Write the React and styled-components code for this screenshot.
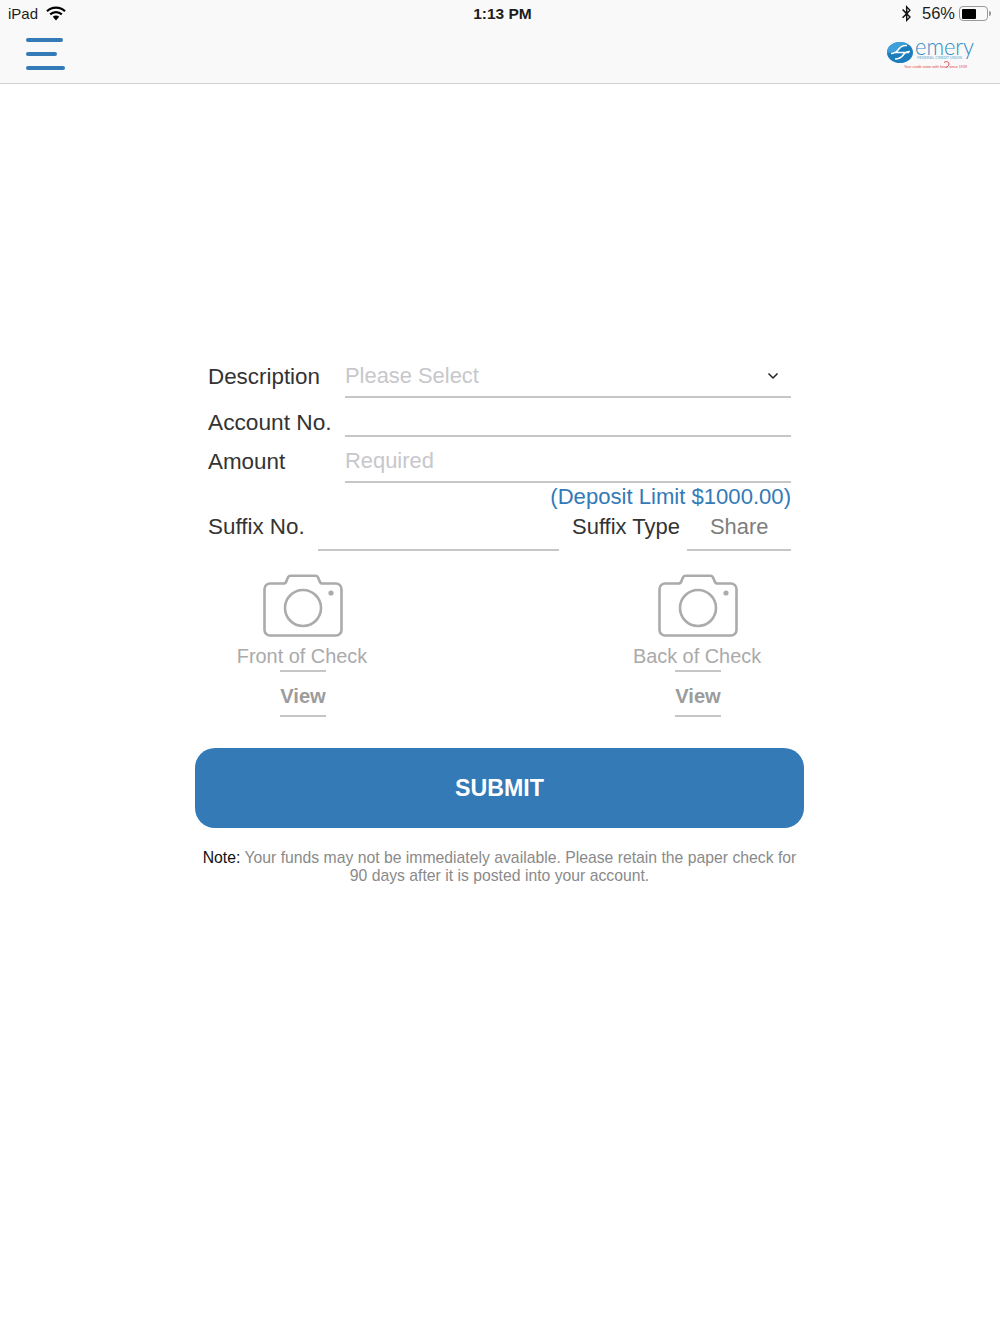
import styled, { createGlobalStyle } from "styled-components";
import { FaBluetoothB } from "react-icons/fa";

const Global = createGlobalStyle`
  body {
    margin: 0;
    background: #fff;
    font-family: "Liberation Sans", Arial, sans-serif;
  }
`;

const Page = styled.div`
  width: 1000px;
  height: 1334px;
  overflow: hidden;
`;

const Header = styled.header`
  height: 84px;
  box-sizing: border-box;
  background: #f9f9f9;
  border-bottom: 1px solid #d2d2d2;
`;

const StatusBar = styled.div`
  height: 27px;
  display: grid;
  grid-template-columns: 1fr auto 1fr;
  align-items: center;
  padding: 0 12px 0 8px;
  font-size: 16.5px;
  color: #1c1c1c;
`;

const StatusLeft = styled.div`
  display: flex;
  align-items: center;
  gap: 8px;
  font-size: 15px;
`;

const StatusRight = styled.div`
  display: flex;
  align-items: center;
  justify-content: flex-end;
  gap: 4px;
`;

const Time = styled.div`
  font-size: 15.5px;
  font-weight: bold;
  margin-left: 9px;
`;

const Battery = styled.div`
  width: 29px;
  height: 15px;
  box-sizing: border-box;
  border: 1px solid #9a9a9a;
  border-radius: 4px;
  padding: 1.5px;
  display: flex;
  position: relative;

  &::before {
    content: "";
    width: 62%;
    background: #000;
    border-radius: 1px;
  }

  &::after {
    content: "";
    position: absolute;
    right: -4px;
    top: 4px;
    width: 2px;
    height: 5px;
    background: #9a9a9a;
    border-radius: 0 2px 2px 0;
  }
`;

const BluetoothWrap = styled.span`
  display: flex;
  margin-right: 3px;
`;

const NavRow = styled.div`
  display: flex;
  justify-content: space-between;
  align-items: flex-start;
  padding: 11px 24px 0 26px;
`;

const Menu = styled.div`
  display: flex;
  flex-direction: column;
  gap: 10px;
`;

const MenuBar = styled.div`
  width: ${(p) => p.$w}px;
  height: 4px;
  border-radius: 2px;
  background: #337ab7;
`;

const LogoSvg = styled.svg`
  display: block;
  margin-top: -8px;
`;

const Panel = styled.main`
  width: 609px;
  margin-left: 195px;
  padding-top: 272px;
`;

const Form = styled.div`
  width: 583px;
  margin: 0 13px;
  color: #333;
  font-size: 22.4px;
`;

const Row = styled.div`
  display: flex;
  height: ${(p) => p.$h}px;
`;

const Label = styled.div`
  width: ${(p) => p.$w || 137}px;
  flex-shrink: 0;
  box-sizing: border-box;
  padding-top: ${(p) => p.$top}px;
  padding-left: ${(p) => p.$left || 0}px;
  font-size: ${(p) => p.$size || 22.4}px;
  line-height: 26px;
  white-space: nowrap;
`;

const Field = styled.div`
  flex: ${(p) => (p.$w ? `0 0 ${p.$w}px` : 1)};
  box-sizing: border-box;
  height: ${(p) => p.$h}px;
  padding: ${(p) => p.$pad || "0"};
  border-bottom: 2px solid #c6c6c6;
  display: flex;
  justify-content: space-between;
  align-items: center;
`;

const Placeholder = styled.span`
  color: #c7c7cc;
  font-size: 21.9px;
`;

const Value = styled.span`
  color: #7d7d7d;
  font-size: 21.9px;
  margin-left: 23px;
`;

const Chevron = styled.svg`
  margin-right: 12px;
`;

const Limit = styled.div`
  height: 27px;
  line-height: 27px;
  font-size: 22.1px;
  text-align: right;
  color: #337ab7;
`;

const CheckRow = styled.div`
  display: grid;
  grid-template-columns: 190px 190px;
  column-gap: 205px;
  margin-top: 23px;
`;

const CheckCol = styled.div`
  display: flex;
  flex-direction: column;
  align-items: center;
`;

const CheckLabel = styled.div`
  margin: 6px 2px 2px 0;
  font-size: 19.9px;
  line-height: 24px;
  color: #aaa;
  white-space: nowrap;
`;

const Rule = styled.div`
  width: 46px;
  height: 2px;
  background: #c6c6c6;
`;

const ViewLink = styled.div`
  margin: 12px 0 7px;
  font-size: 20.2px;
  font-weight: bold;
  line-height: 24px;
  color: #9c9c9c;
`;

const SubmitButton = styled.button`
  display: block;
  width: 609px;
  height: 80px;
  margin-top: 31px;
  border: 0;
  border-radius: 20px;
  background: #337ab7;
  color: #fff;
  font-family: inherit;
  font-size: 23.2px;
  font-weight: bold;
`;

const Note = styled.p`
  margin: 21px 0 0;
  font-size: 15.75px;
  line-height: 18px;
  text-align: center;
  color: #8a8a8a;
`;

const NoteLead = styled.span`
  color: #111;
`;

const Wifi = () => (
  <svg width="20" height="15" viewBox="0 0 20 15">
    <path d="M1 5.2a13 13 0 0 1 18 0" fill="none" stroke="#000" strokeWidth="2.2" />
    <path d="M4.2 8.4a8.5 8.5 0 0 1 11.6 0" fill="none" stroke="#000" strokeWidth="2.2" />
    <path d="M6.8 10.8 10 14.4l3.2-3.6a4.6 4.6 0 0 0-6.4 0z" fill="#000" />
  </svg>
);

const Logo = () => (
  <LogoSvg width="90" height="40" viewBox="0 -8 90 40">
    <ellipse cx="14" cy="14.500" rx="13" ry="10.500" fill="#1c7dbd" />
    <path d="M1 14.500C1 8.500 7 4 14 4c3 0 6 .8 8 2.300-5-.8-8 2-10 5-1.500 2-6 4-11 3.200z" fill="#3f9fd8" />
    <path d="M5 15.500c3 0 5-1 7-3.500 2-3 5-5 9-4.500M9 21c4 0 7-2 9-5 1-1.500 3-2.500 6-2.500M8 14.500h15" fill="none" stroke="#fff" strokeWidth="1.500" />
    <text x="29" y="17" fontFamily="Lato, sans-serif" fontWeight="300" fontSize="23" fill="#2f8cc4" textLength="59" lengthAdjust="spacingAndGlyphs">emery</text>
    <text x="31" y="20.500" fontFamily="Liberation Sans, sans-serif" fontWeight="bold" fontSize="3.400" fill="#8dbfdc" textLength="45" lengthAdjust="spacingAndGlyphs">FEDERAL CREDIT UNION</text>
    <text x="18" y="29.500" fontFamily="Liberation Sans, sans-serif" fontSize="3.600" fill="#d9434b" textLength="63" lengthAdjust="spacingAndGlyphs">Your credit union with heart since 1939</text>
    <path d="M58 24.500c2-1.500 5-1 5 1.500 0 2-3 3.500-3 3.500" fill="none" stroke="#d9434b" strokeWidth="1" />
  </LogoSvg>
);

const Camera = () => (
  <svg width="80" height="64" viewBox="0 0 80 64">
    <path
      d="M7 9.500h13.500c1.500 0 2.500-1 3-2.500l1.200-3c.5-1.300 1.500-2.200 3-2.200h24.600c1.500 0 2.500.9 3 2.200l1.200 3c.5 1.500 1.500 2.500 3 2.500H73c3 0 5.500 2.500 5.500 5.500v41c0 3-2.500 5.500-5.500 5.500H7c-3 0-5.500-2.500-5.500-5.500V15c0-3 2.500-5.500 5.500-5.500z"
      fill="none"
      stroke="#ababab"
      strokeWidth="2.600"
    />
    <circle cx="40" cy="34" r="18" fill="none" stroke="#ababab" strokeWidth="2.600" />
    <circle cx="68" cy="19" r="2.600" fill="#ababab" />
  </svg>
);

const CheckSide = ({ label }) => (
  <CheckCol>
    <Camera />
    <CheckLabel>{label}</CheckLabel>
    <Rule />
    <ViewLink>View</ViewLink>
    <Rule />
  </CheckCol>
);

export default function App() {
  return (
    <Page>
      <Global />
      <Header>
        <StatusBar>
          <StatusLeft>
            iPad
            <Wifi />
          </StatusLeft>
          <Time>1:13 PM</Time>
          <StatusRight>
            <BluetoothWrap>
              <FaBluetoothB size={17} color="#111" />
            </BluetoothWrap>
            <span>56%</span>
            <Battery />
          </StatusRight>
        </StatusBar>
        <NavRow>
          <Menu>
            <MenuBar $w={37} />
            <MenuBar $w={31} />
            <MenuBar $w={39} />
          </Menu>
          <Logo />
        </NavRow>
      </Header>
      <Panel>
        <Form>
          <Row $h={42}>
            <Label $top={8}>Description</Label>
            <Field $h={42}>
              <Placeholder>Please Select</Placeholder>
              <Chevron width="12" height="8" viewBox="0 0 12 8">
                <path d="M1.500 1.500 6 6l4.500-4.500" fill="none" stroke="#222" strokeWidth="1.500" />
              </Chevron>
            </Field>
          </Row>
          <Row $h={39}>
            <Label $top={11} $size={22.7}>Account No.</Label>
            <Field $h={39} />
          </Row>
          <Row $h={46}>
            <Label $top={12}>Amount</Label>
            <Field $h={46} $pad="3px 0 0">
              <Placeholder>Required</Placeholder>
            </Field>
          </Row>
          <Limit>(Deposit Limit $1000.00)</Limit>
          <Row $h={41}>
            <Label $w={110} $top={4}>Suffix No.</Label>
            <Field $w={241} $h={41} />
            <Label $w={128} $top={4} $left={13} $size={22}>Suffix Type</Label>
            <Field $w={104} $h={41} $pad="0 0 6px">
              <Value>Share</Value>
            </Field>
          </Row>
          <CheckRow>
            <CheckSide label="Front of Check" />
            <CheckSide label="Back of Check" />
          </CheckRow>
        </Form>
        <SubmitButton>SUBMIT</SubmitButton>
        <Note>
          <NoteLead>Note:</NoteLead> Your funds may not be immediately available. Please retain the paper check for
          <br />
          90 days after it is posted into your account.
        </Note>
      </Panel>
    </Page>
  );
}
